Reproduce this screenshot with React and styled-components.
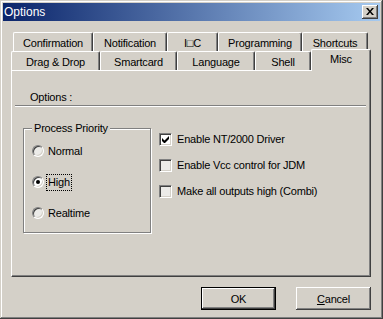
import React from 'react';
import styled, { createGlobalStyle } from 'styled-components';

const Global = createGlobalStyle`
  html, body { margin: 0; padding: 0; background: #d4d0c8; }
  body { font-family: "Liberation Sans", Arial, sans-serif; }
`;

const Window = styled.div`
  width: 383px;
  height: 319px;
  box-sizing: border-box;
  padding: 3px;
  background: #d4d0c8;
  box-shadow: inset -1px -1px #404040, inset 1px 1px #d4d0c8,
    inset -2px -2px #808080, inset 2px 2px #ffffff;
  display: flex;
  flex-direction: column;
  font-family: "Liberation Sans", Arial, sans-serif;
  font-size: 11px;
  letter-spacing: -0.2px;
  color: #000;
`;

const TitleBar = styled.div`
  height: 18px;
  flex: none;
  display: flex;
  align-items: center;
  justify-content: space-between;
  background: linear-gradient(to right, #0a246a, #a6caf0);
  padding: 0 2px 0 1px;
`;

const Title = styled.span`
  color: #fff;
  font-size: 12px;
  letter-spacing: 0;
`;

const CloseBtn = styled.div`
  width: 16px;
  height: 14px;
  box-sizing: border-box;
  background: #d4d0c8;
  box-shadow: inset -1px -1px #404040, inset 1px 1px #ffffff,
    inset -2px -2px #808080, inset 2px 2px #d4d0c8;
  display: flex;
  align-items: center;
  justify-content: center;
  padding-bottom: 1px;
`;

const Tabs = styled.div`
  margin: 11px 9px 0 8px;
  display: flex;
  flex-direction: column;
`;

const TabRow = styled.div`
  display: flex;
  align-items: flex-start;
  height: 19px;
  padding-left: ${p => p.$indent}px;
`;

const Tab = styled.div`
  width: ${p => p.$w}px;
  height: ${p => (p.$active ? 22 : 19)}px;
  margin-top: ${p => (p.$active ? -2 : 0)}px;
  padding-bottom: ${p => (p.$active ? 3 : 0)}px;
  padding-top: ${p => (p.$active ? 0 : 1)}px;
  box-sizing: border-box;
  border-top: 1px solid #ffffff;
  border-left: 1px solid #ffffff;
  border-right: 1px solid #404040;
  border-radius: 2px 2px 0 0;
  box-shadow: inset -1px 0 #808080;
  background: #d4d0c8;
  display: flex;
  align-items: center;
  justify-content: center;
  white-space: nowrap;
  position: relative;
  z-index: ${p => (p.$active ? 3 : 1)};
`;

const Panel = styled.div`
  height: 207px;
  box-sizing: border-box;
  border-top: 1px solid #ffffff;
  border-left: 1px solid #ffffff;
  border-right: 1px solid #404040;
  border-bottom: 1px solid #404040;
  box-shadow: inset -1px -1px #808080;
  display: flex;
  flex-direction: column;
  position: relative;
  z-index: 2;
`;

const Header = styled.div`
  margin-top: 19px;
  height: 14px;
  line-height: 14px;
  padding-left: 18px;
`;

const Separator = styled.div`
  margin: 1px 4px 0 3px;
  height: 0;
  border-top: 1px solid #808080;
  border-bottom: 1px solid #ffffff;
`;

const Body = styled.div`
  margin-top: 21px;
  padding-left: 11px;
  display: flex;
  align-items: flex-start;
`;

const GroupBox = styled.div`
  width: 128px;
  height: 105px;
  box-sizing: border-box;
  border: 1px solid #808080;
  box-shadow: inset 1px 1px #ffffff, 1px 1px 0 #ffffff;
  position: relative;
  display: flex;
  flex-direction: column;
  gap: 13px;
  padding: 13px 0 0 8px;
`;

const GroupLabel = styled.span`
  position: absolute;
  top: -8px;
  left: 8px;
  padding: 0 2px;
  background: #d4d0c8;
  line-height: 14px;
`;

const OptionRow = styled.div`
  display: flex;
  align-items: center;
  height: 18px;
  gap: ${p => p.$gap}px;
`;

const RadioCircle = styled.span`
  width: 12px;
  height: 12px;
  box-sizing: border-box;
  border-radius: 50%;
  border: 1px solid;
  border-color: #808080 #ffffff #ffffff #808080;
  box-shadow: inset 1px 1px #404040, inset -1px -1px #d4d0c8;
  background: ${p => (p.$checked ? '#ffffff' : '#ecebe8')};
  display: flex;
  align-items: center;
  justify-content: center;
  flex: none;
`;

const Dot = styled.span`
  width: 4px;
  height: 4px;
  border-radius: 50%;
  background: #000;
`;

const Label = styled.span`
  padding: 1px 1px;
  border: 1px dotted ${p => (p.$focus ? '#000' : 'transparent')};
  line-height: 13px;
  white-space: nowrap;
`;

const CheckList = styled.div`
  margin-left: 8px;
  padding-top: 2px;
  display: flex;
  flex-direction: column;
  gap: 8px;
`;

const CheckBox = styled.span`
  width: 13px;
  height: 13px;
  box-sizing: border-box;
  border: 1px solid;
  border-color: #808080 #ffffff #ffffff #808080;
  box-shadow: inset 1px 1px #404040, inset -1px -1px #d4d0c8;
  background: ${p => (p.$checked ? '#ffffff' : '#ecebe8')};
  display: flex;
  align-items: center;
  justify-content: center;
  flex: none;
`;

const Buttons = styled.div`
  margin-top: 10px;
  padding-right: 9px;
  display: flex;
  justify-content: flex-end;
  gap: 20px;
`;

const Button = styled.div`
  width: 75px;
  height: 23px;
  box-sizing: border-box;
  background: #d4d0c8;
  border: ${p => (p.$default ? '1px solid #000' : 'none')};
  box-shadow: inset -1px -1px #404040, inset 1px 1px #ffffff,
    inset -2px -2px #808080, inset 2px 2px #d4d0c8;
  display: flex;
  align-items: center;
  justify-content: center;
`;

const rowOne = [
  ['Confirmation', 80],
  ['Notification', 74],
  ['I\u25A1C', 51],
  ['Programming', 84],
  ['Shortcuts', 66],
];

const rowTwo = [
  ['Drag & Drop', 89],
  ['Smartcard', 77],
  ['Language', 78],
  ['Shell', 56],
  ['Misc', 60, true],
];

const radios = [
  ['Normal', false],
  ['High', true],
  ['Realtime', false],
];

const checks = [
  ['Enable NT/2000 Driver', true],
  ['Enable Vcc control for JDM', false],
  ['Make all outputs high (Combi)', false],
];

export default function App() {
  return (
    <>
      <Global />
      <Window>
        <TitleBar>
          <Title>Options</Title>
          <CloseBtn>
            <svg width="8" height="7" viewBox="0 0 8 7">
              <path d="M0 0h2l2 2.5L6 0h2L5 3.5L8 7H6L4 4.5L2 7H0l3-3.5z" fill="#000" />
            </svg>
          </CloseBtn>
        </TitleBar>
        <Tabs>
          <TabRow $indent={2}>
            {rowOne.map(([t, w]) => (
              <Tab key={t} $w={w}>{t}</Tab>
            ))}
          </TabRow>
          <TabRow $indent={0}>
            {rowTwo.map(([t, w, a]) => (
              <Tab key={t} $w={w} $active={a}>{t}</Tab>
            ))}
          </TabRow>
          <Panel>
            <Header>Options :</Header>
            <Separator />
            <Body>
              <GroupBox>
                <GroupLabel>Process Priority</GroupLabel>
                {radios.map(([t, c]) => (
                  <OptionRow key={t} $gap={2}>
                    <RadioCircle $checked={c}>{c && <Dot />}</RadioCircle>
                    <Label $focus={c}>{t}</Label>
                  </OptionRow>
                ))}
              </GroupBox>
              <CheckList>
                {checks.map(([t, c]) => (
                  <OptionRow key={t} $gap={3}>
                    <CheckBox $checked={c}>
                      {c && (
                        <svg width="7" height="7" viewBox="0 0 7 7">
                          <path d="M0 2v3l2 2h1l4-4V0L2.5 4.5z" fill="#000" />
                        </svg>
                      )}
                    </CheckBox>
                    <Label>{t}</Label>
                  </OptionRow>
                ))}
              </CheckList>
            </Body>
          </Panel>
        </Tabs>
        <Buttons>
          <Button $default>OK</Button>
          <Button><span><u>C</u>ancel</span></Button>
        </Buttons>
      </Window>
    </>
  );
}
